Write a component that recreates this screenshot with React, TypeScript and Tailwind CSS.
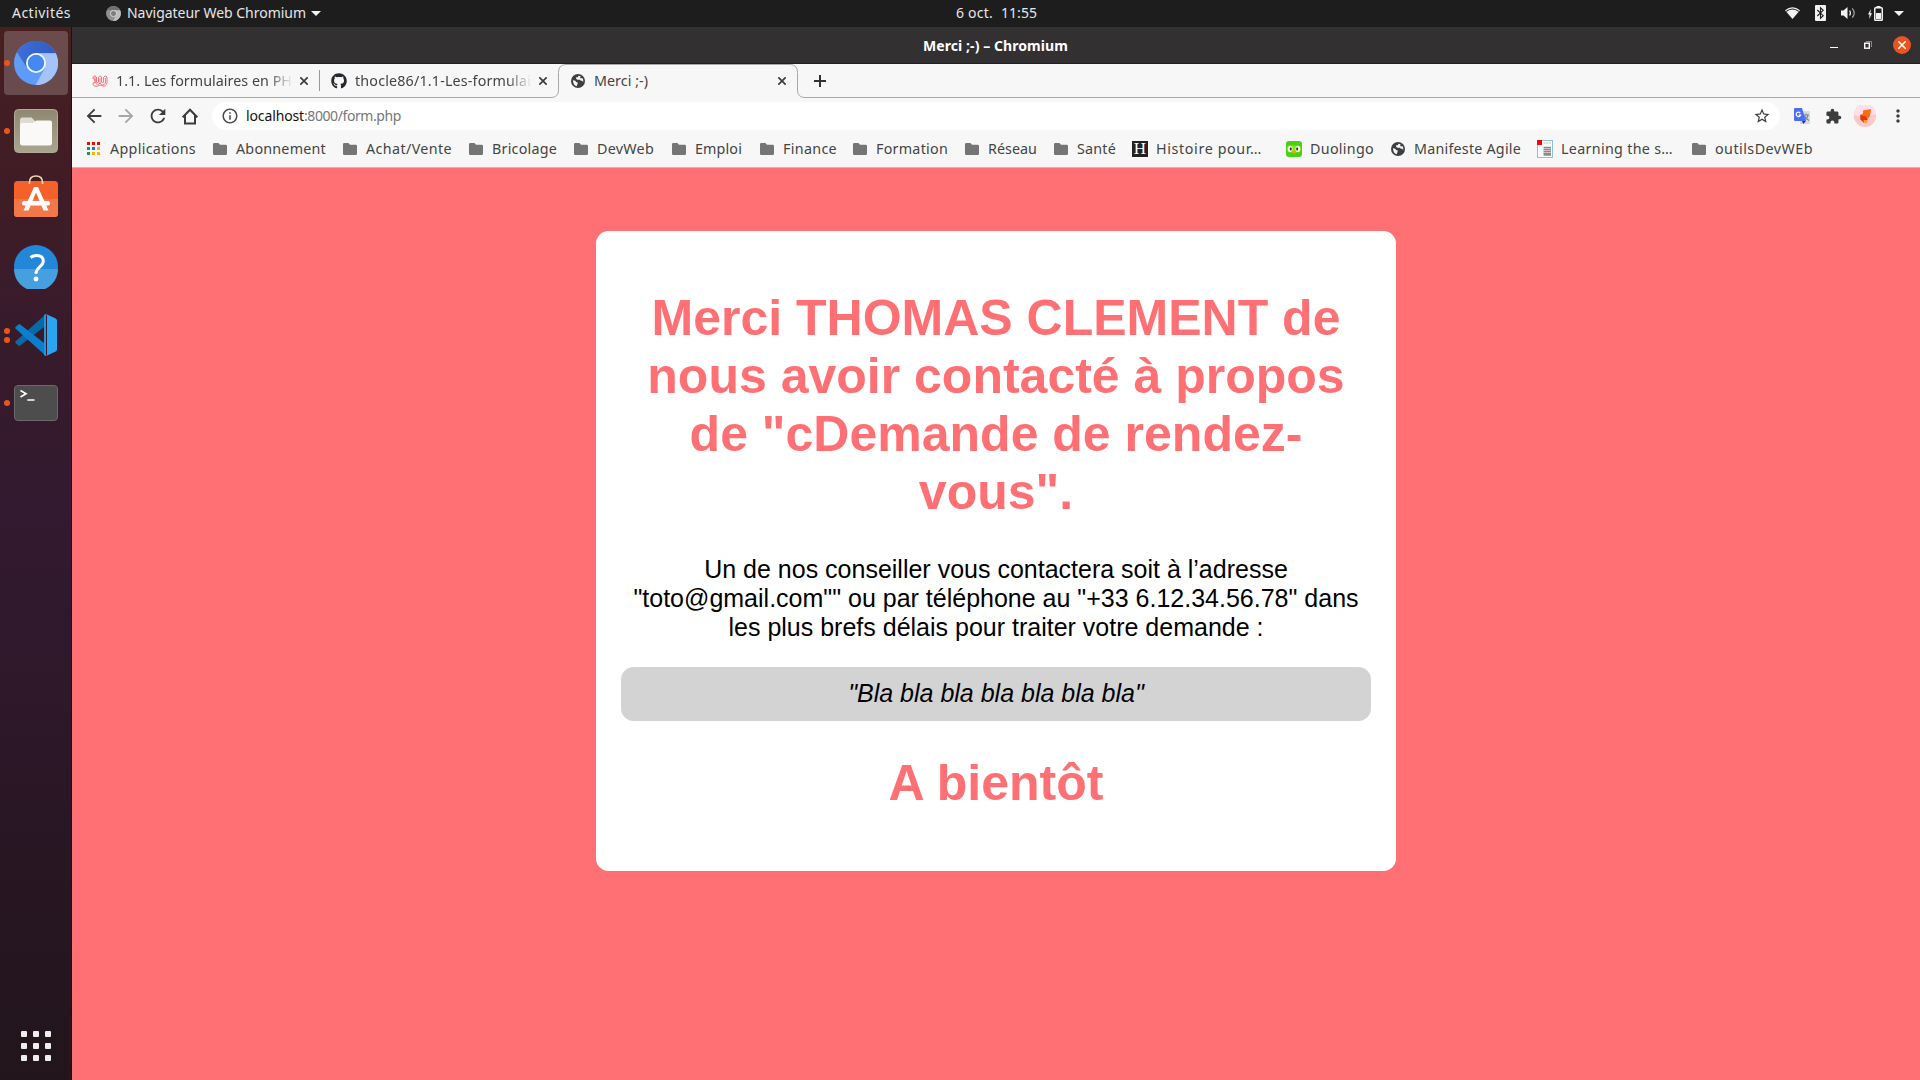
import { useLayoutEffect, useRef, useState } from "react";
import type { ReactNode } from "react";
import { MdArrowBack, MdArrowForward, MdExtension, MdInfoOutline, MdMoreVert, MdRefresh, MdStarBorder } from "react-icons/md";
import { FaGithub } from "react-icons/fa";

/* Single-line label whose letter spacing is adjusted to fill the given width. */
function Label({ text, width, className = "" }: { text: string; width: number; className?: string }) {
  const ref = useRef<HTMLSpanElement>(null);
  const [spacing, setSpacing] = useState(0);
  useLayoutEffect(() => {
    if (!ref.current) return;
    const natural = ref.current.getBoundingClientRect().width - spacing * text.length;
    setSpacing((width - natural) / text.length);
  }, [text, width]);
  return (
    <span className={`block shrink-0 whitespace-pre ${className}`} style={{ width }}>
      <span ref={ref} className="inline-block" style={{ letterSpacing: spacing }}>
        {text}
      </span>
    </span>
  );
}

const Folder = () => (
  <svg className="h-3 w-3.5 shrink-0" viewBox="0 0 14 12" fill="#757575">
    <path d="M1.3 0H5.4L7 1.7H12.7Q14 1.7 14 3V10.7Q14 12 12.7 12H1.3Q0 12 0 10.7V1.3Q0 0 1.3 0Z" />
  </svg>
);

const Globe = () => (
  <svg className="h-3.5 w-3.5 shrink-0" viewBox="0 0 14 14">
    <circle cx="7" cy="7" r="7" fill="#3c3e40" />
    <path d="M2 6.2Q3 6 4.2 6.8L5.4 8.2H6.6V9.8L5.6 12.2Q2 11 2 6.2Z" fill="#f7f7f7" />
    <path d="M7.6 1.8L6.8 3.3H5.1V4.8L6.4 5.7H9L9.8 6.8H11.1L12.2 8Q12.7 5.5 11.3 3.9L9.8 4.4L9.1 3.2L9.7 2.3Z" fill="#f7f7f7" />
  </svg>
);

const Apps = () => {
  const colors = ["#f00", "#f00", "#f00", "#0f9d58", "#1a73e8", "#ffb300", "#0f9d58", "#ffb300", "#ffb300"];
  return (
    <svg className="h-[13px] w-[13px] shrink-0" viewBox="0 0 13 13">
      {colors.map((c, i) => (
        <rect key={i} x={(i % 3) * 5} y={Math.floor(i / 3) * 5} width="3" height="3" fill={c} />
      ))}
    </svg>
  );
};

const SerifH = () => (
  <span className="flex h-4 w-4 shrink-0 items-center justify-center bg-[#222] font-['Liberation_Serif',serif] text-[17px] leading-none text-white">
    H
  </span>
);

const Owl = () => (
  <svg className="h-4 w-4 shrink-0" viewBox="0 0 16 16">
    <rect width="16" height="16" rx="3" fill="#4bd012" />
    <path d="M1 7Q1 4 4 4.5H12Q15 4 15 7V9Q14 12 11 11.5H5Q2 12 1 9Z" fill="#89e219" />
    <ellipse cx="4.2" cy="8" rx="2.3" ry="3" fill="#fff" />
    <ellipse cx="11.8" cy="8" rx="2.3" ry="3" fill="#fff" />
    <ellipse cx="4.8" cy="8" rx="1" ry="1.7" fill="#333" />
    <ellipse cx="11.2" cy="8" rx="1" ry="1.7" fill="#333" />
    <path d="M6.2 10.2L8 9.4L9.8 10.2L9 12.4H7Z" fill="#ff9d00" />
  </svg>
);

const PageIcon = () => (
  <svg className="h-[18px] w-4 shrink-0" viewBox="0 0 16 18">
    <rect x=".5" y=".5" width="15" height="17" fill="#fff" stroke="#8fc3d2" />
    <rect width="5" height="5" fill="#f00" />
    <path d="M6.5 3H14" stroke="#bbb" strokeDasharray="2 .6" />
    <path d="M6.5 7.5H14M6.5 9.5H14M6.5 11.5H14M6.5 13.5H14M6.5 15H14" stroke="#8a8a8a" strokeWidth="1.3" />
  </svg>
);

const bookmarks: { icon: ReactNode; text: string; width: number; slot: string }[] = [
  { icon: <Apps />, text: "Applications", width: 86, slot: "w-[126px] gap-[10px]" },
  { icon: <Folder />, text: "Abonnement", width: 90, slot: "w-[130px] gap-[9px]" },
  { icon: <Folder />, text: "Achat/Vente", width: 86, slot: "w-[126px] gap-[9px]" },
  { icon: <Folder />, text: "Bricolage", width: 65, slot: "w-[105px] gap-[9px]" },
  { icon: <Folder />, text: "DevWeb", width: 57, slot: "w-[98px] gap-[9px]" },
  { icon: <Folder />, text: "Emploi", width: 47, slot: "w-[88px] gap-[9px]" },
  { icon: <Folder />, text: "Finance", width: 54, slot: "w-[93px] gap-[9px]" },
  { icon: <Folder />, text: "Formation", width: 72, slot: "w-[112px] gap-[9px]" },
  { icon: <Folder />, text: "Réseau", width: 49, slot: "w-[89px] gap-[9px]" },
  { icon: <Folder />, text: "Santé", width: 39, slot: "w-[78px] gap-[9px]" },
  { icon: <SerifH />, text: "Histoire pour…", width: 106, slot: "w-[154px] gap-[8px]" },
  { icon: <Owl />, text: "Duolingo", width: 64, slot: "w-[105px] gap-[8px]" },
  { icon: <Globe />, text: "Manifeste Agile", width: 107, slot: "w-[146px] gap-[9px]" },
  { icon: <PageIcon />, text: "Learning the s…", width: 112, slot: "w-[155px] gap-[8px]" },
  { icon: <Folder />, text: "outilsDevWEb", width: 98, slot: "w-[130px] gap-[9px]" },
];

const Close = () => (
  <svg className="h-2 w-2 shrink-0" viewBox="0 0 8 8" stroke="#3c3c3c" strokeWidth="1.7">
    <path d="M.3.3L7.7 7.7M7.7.3L.3 7.7" />
  </svg>
);

const ChromiumGray = () => (
  <svg className="h-[15px] w-[15px] shrink-0" viewBox="0 0 16 16">
    <circle cx="8" cy="8" r="8" fill="#8f8f8f" />
    <path d="M1.2 4A8 8 0 0 1 15 4.5H8Z" fill="#6f6f6f" />
    <path d="M15 4.5A8 8 0 0 1 7.6 16L11 9L9 4.5Z" fill="#bdbdbd" />
    <circle cx="8" cy="8" r="3.3" fill="#7d7d7d" stroke="#ddd" strokeWidth="1" />
  </svg>
);

function TopBar() {
  return (
    <header className="flex h-[27px] shrink-0 items-center bg-[#1d1d1d] pb-px text-[14px] leading-[26px] text-[#e6e6e6]">
      <Label text="Activités" width={59} className="ml-3" />
      <div className="ml-[35px] flex items-center">
        <ChromiumGray />
        <Label text="Navigateur Web Chromium" width={179} className="ml-[6px]" />
        <svg className="ml-[5px] h-[5px] w-[10px]" viewBox="0 0 10 5" fill="#f2f2f2"><path d="M0 0H10L5 5Z" /></svg>
      </div>
      <div className="ml-[635px] flex">
        <Label text="6 oct." width={37} />
        <Label text="11:55" width={36} className="ml-2" />
      </div>
      <div className="ml-[748px] flex items-center text-[#f2f2f2]">
        <svg className="h-3 w-[15px]" viewBox="0 0 15 12">
          <path d="M0 3.2Q7.5-2.8 15 3.2L7.5 12Z" fill="#f2f2f2" />
          <path d="M1.2 4.4Q7.5-.5 13.8 4.4" fill="none" stroke="#1d1d1d" strokeWidth="1.1" />
        </svg>
        <svg className="ml-[15px] h-4 w-[11px]" viewBox="0 0 11 16">
          <rect width="11" height="16" rx="1" fill="#f2f2f2" />
          <path d="M2.3 5L8.2 10.7L5.5 13.2V2.8L8.2 5.3L2.3 11" fill="none" stroke="#1d1d1d" strokeWidth="1.1" />
        </svg>
        <svg className="ml-[15px] h-3 w-[15px]" viewBox="0 0 15 12">
          <path d="M0 3.5H2.5L6.5 0V12L2.5 8.5H0Z" fill="#f2f2f2" />
          <path d="M8.6 3.5Q10.3 6 8.6 8.5" fill="none" stroke="#f2f2f2" strokeWidth="1.2" />
          <path d="M11.2 1.3Q15.2 6 11.2 10.7" fill="none" stroke="#a5a5a5" strokeWidth="1.2" />
        </svg>
        <svg className="ml-[12px] h-[15px] w-[15px]" viewBox="0 0 15 15" fill="#f2f2f2">
          <path d="M2.8 3L0 8.5H1.6L1.2 13L4 7.3H2.4Z" />
          <rect x="6.75" y="1.75" width="7.5" height="12.5" rx=".8" fill="none" stroke="#f2f2f2" strokeWidth="1.5" />
          <rect x="8.5" y="0" width="4" height="2" />
          <rect x="8" y="7" width="5" height="6" />
        </svg>
        <svg className="ml-[11px] h-[5px] w-[10px]" viewBox="0 0 10 5" fill="#f2f2f2"><path d="M0 0H10L5 5Z" /></svg>
      </div>
    </header>
  );
}

const Dots = ({ count }: { count: number }) => (
  <span className="flex w-[14px] shrink-0 flex-col items-center gap-[3px]">
    {Array.from({ length: count }, (_, i) => (
      <span key={i} className="h-[6px] w-[6px] rounded-full bg-[#e95420]" />
    ))}
  </span>
);

function Dock() {
  const apps: { dots: number; active?: boolean; icon: ReactNode }[] = [
    {
      dots: 1,
      active: true,
      icon: (
        <svg className="h-11 w-11" viewBox="0 0 44 44">
          <defs>
            <linearGradient id="cTop" x1="0" x2="1"><stop stopColor="#3f6fd8" /><stop offset="1" stopColor="#2f5bc6" /></linearGradient>
            <linearGradient id="cLeft" x1="0" y1="0" x2="0" y2="1"><stop stopColor="#669df6" /><stop offset="1" stopColor="#5b9bfb" /></linearGradient>
          </defs>
          <circle cx="22" cy="22" r="22" fill="url(#cLeft)" />
          <path d="M2.9 11A22 22 0 0 1 41.8 12.2H22L13 27Z" fill="url(#cTop)" />
          <path d="M41.8 12.2A22 22 0 0 1 21.5 44L31 27L22 12.2Z" fill="#a3c3fa" />
          <circle cx="22" cy="22" r="10" fill="#f5f8ff" />
          <circle cx="22" cy="22" r="8.2" fill="#4688f1" />
        </svg>
      ),
    },
    {
      dots: 1,
      icon: (
        <svg className="h-11 w-11" viewBox="0 0 44 44">
          <defs><linearGradient id="fb" x1="0" y1="0" x2="0" y2="1"><stop stopColor="#8f8871" /><stop offset="1" stopColor="#aaa38f" /></linearGradient></defs>
          <rect x=".5" y=".5" width="43" height="43" rx="4" fill="url(#fb)" stroke="#b0ac99" />
          <path d="M6 11Q6 8.5 8.5 8.5H17.5L21.5 12.5H31V20H6Z" fill="#dfdbce" />
          <path d="M6 15.5Q6 14 8 14H19L22.5 11.5H36Q38 11.5 38 13.5V34Q38 36.5 35.5 36.5H8.5Q6 36.5 6 34Z" fill="#faf9f7" />
        </svg>
      ),
    },
    {
      dots: 0,
      icon: (
        <svg className="h-12 w-11" viewBox="0 0 44 48">
          <rect y="6" width="44" height="36" rx="3.5" fill="#f5612a" />
          <path d="M0 24H44V38.5Q44 42 40.5 42H3.5Q0 42 0 38.5Z" fill="#f2784a" />
          <path d="M15.5 9V7.5Q15.5 1 22 1T28.5 7.5V9" fill="none" stroke="#f0d8b0" strokeWidth="1.6" />
          <path d="M20 12H24L34.5 35.5H29.5L22 17.5L14.5 35.5H9.5Z" fill="#fff" />
          <rect x="8" y="26" width="28" height="4.5" rx="2.2" fill="#fff" />
        </svg>
      ),
    },
    {
      dots: 0,
      icon: (
        <svg className="h-11 w-11" viewBox="0 0 44 44">
          <circle cx="22" cy="22" r="22" fill="#2287d8" />
          <path d="M0 24H44A22 22 0 0 1 0 24Z" fill="#46a0df" />
          <path d="M16.5 12.5Q19 10.5 22.5 10.5Q29.3 10.5 29.3 16Q29.3 19 26 21.7Q22 25 22 28.8" fill="none" stroke="#fff" strokeWidth="3" />
          <circle cx="22" cy="34" r="2.4" fill="#fff" />
        </svg>
      ),
    },
    {
      dots: 2,
      icon: (
        <svg className="h-[42px] w-[42px]" viewBox="0 0 42 42">
          <path d="M31 0V11.5L5.2 31.6Q4.3 32.3 3.5 31.6L.7 29.2Q-.3 28.3.7 27.3Z" fill="#0769a8" />
          <path d="M31 42V30.5L5.2 10.4Q4.3 9.7 3.5 10.4L.7 12.8Q-.3 13.7.7 14.7Z" fill="#0a7fcb" />
          <path d="M31 0L40.7 4.5Q42 5.2 42 6.7V35.3Q42 36.8 40.7 37.5L31 42Q32 41 32 39.5V2.5Q32 1 31 0Z" fill="#2ba4f2" />
          <path d="M31 0V42L29 41.3V1Z" fill="#2196e0" />
        </svg>
      ),
    },
    {
      dots: 1,
      icon: (
        <svg className="h-9 w-11" viewBox="0 0 44 36">
          <rect x=".5" y=".5" width="43" height="35" rx="3.5" fill="#4d4d4d" stroke="#6a6a6a" />
          <path d="M6.5 5.5L12 8.7L6.5 12M13.3 15H20.5" fill="none" stroke="#fff" strokeWidth="1.7" />
        </svg>
      ),
    },
  ];
  return (
    <aside className="flex w-[72px] shrink-0 flex-col border-r border-[#1f1018] bg-[linear-gradient(180deg,#47201f_0%,#421d24_10%,#371b2b_30%,#341a30_45%,#2b1727_70%,#22151b_100%)] pt-1">
      {apps.map((app, i) => (
        <div key={i} className="flex h-[68px] items-start">
          <div className={app.active ? "ml-1 flex h-16 w-16 items-center rounded bg-white/20" : "ml-1 flex h-16 w-16 items-center"}>
            <div className="-ml-1 flex w-[72px] shrink-0 items-center">
              <Dots count={app.dots} />
              <span className="flex w-11 justify-center">{app.icon}</span>
            </div>
          </div>
        </div>
      ))}
      <div className="mb-[19px] ml-[21px] mt-auto grid w-[30px] grid-cols-3 gap-[6px]">
        {Array.from({ length: 9 }, (_, i) => (
          <span key={i} className="h-[6px] w-[6px] rounded-[1px] bg-[#eeeeec]" />
        ))}
      </div>
    </aside>
  );
}

function TitleBar() {
  return (
    <div className="flex h-[37px] shrink-0 items-center border-b border-[#211f20] bg-[#333031] text-[14px] font-bold leading-[36px] text-white">
      <Label text="Merci ;-) – Chromium" width={145} className="ml-[851px] pt-px" />
      <svg className="ml-[762px] h-[9px] w-2" viewBox="0 0 8 9"><rect y="6" width="8" height="1" fill="#fff" /></svg>
      <svg className="ml-[26px] h-2 w-2" viewBox="0 0 8 8">
        <path d="M2 .5H7.5V6" fill="none" stroke="#8b898a" />
        <rect x=".7" y="2.2" width="4.6" height="5" fill="none" stroke="#fff" strokeWidth="1.4" />
      </svg>
      <span className="ml-[21px] flex h-[18px] w-[18px] items-center justify-center rounded-full bg-[#e95420]">
        <svg className="h-2 w-2" viewBox="0 0 8 8" stroke="#fff" strokeWidth="1.5"><path d="M.3.3L7.7 7.7M7.7.3L.3 7.7" /></svg>
      </span>
    </div>
  );
}

function TabStrip() {
  return (
    <div className="flex h-[34px] shrink-0 bg-[#f7f7f7] text-[14.3px] leading-[33px] text-[#444]">
      <div className="flex w-[247px] items-center border-b border-[#a8a8a8] pl-5">
        <svg className="h-3 w-4 shrink-0" viewBox="0 0 16 12" fill="none" stroke="#f57580" strokeWidth="1">
          <path d="M1 2Q3-.5 4.5 2V7Q5.5 9 6.5 7V2.5Q7.5-.5 9.5 2V7Q10.5 9 11.5 7V2.5Q13-.5 15 2V8Q14 12 10.5 11Q8 9 6 11Q1 12.5 1 8L3 7.5V4L1 3.8Z" />
          <path d="M3 1.5V6.5Q5 11.5 8 8V3M8 8Q11 12 13.4 8V3" />
        </svg>
        <div className="ml-2 flex [mask-image:linear-gradient(90deg,#000_152px,transparent_177px)]">
          <Label text="1.1. Les formulaires en PH" width={176} />
        </div>
        <span className="ml-2 flex shrink-0"><Close /></span>
        <span className="ml-[11px] h-[21px] w-px shrink-0 bg-[#999]" />
      </div>
      <div className="flex w-[232px] items-center border-b border-[#a8a8a8] pl-3">
        <FaGithub className="h-4 w-4 shrink-0 text-[#24292e]" />
        <div className="ml-2 flex [mask-image:linear-gradient(90deg,#000_152px,transparent_177px)]">
          <Label text="thocle86/1.1-Les-formulai" width={176} />
        </div>
        <span className="ml-[8px] flex shrink-0"><Close /></span>
      </div>
      <div className="relative flex w-[254px] items-center pl-5">
        <svg className="absolute inset-0 h-[34px] w-[254px]" viewBox="0 0 254 34" fill="none" stroke="#a8a8a8">
          <path d="M0 33.5Q7.5 33.5 7.5 26V8.5Q7.5 .5 15 .5H239Q246.5 .5 246.5 8.5V26Q246.5 33.5 254 33.5" />
        </svg>
        <Globe />
        <Label text="Merci ;-)" width={54} className="-mt-px ml-[9px]" />
        <span className="ml-[130px] flex"><Close /></span>
      </div>
      <div className="flex flex-1 items-center border-b border-[#a8a8a8] pl-[9px]">
        <svg className="h-3 w-3" viewBox="0 0 12 12" stroke="#333" strokeWidth="2"><path d="M6 0V12M0 6H12" /></svg>
      </div>
    </div>
  );
}

function Toolbar() {
  return (
    <div className="flex h-9 shrink-0 items-center bg-[#f7f7f7] text-[#3c3c3c]">
      <MdArrowBack className="ml-[11px] h-[22px] w-[22px]" />
      <MdArrowForward className="ml-[10px] h-[22px] w-[22px] text-[#a6a6a6]" />
      <MdRefresh className="ml-[10px] h-[22px] w-[22px]" />
      <svg className="ml-[13px] h-[17px] w-4" viewBox="0 0 16 17" fill="none" stroke="#3c3c3c" strokeWidth="2">
        <path d="M.7 9.3L8 1.7L15.3 9.3M3 7.5V15.5H13V7.5" />
      </svg>
      <div className="ml-[14px] flex h-7 w-[1568px] shrink-0 items-center rounded-full bg-white pl-[9px] pr-[9px]">
        <MdInfoOutline className="h-[18px] w-[18px] text-[#4a4a4a]" />
        <div className="ml-[7px] flex text-[14px] leading-7">
          <Label text="localhost" width={58} className="text-[#111]" />
          <Label text=":8000/form.php" width={97} className="text-[#777]" />
        </div>
        <MdStarBorder className="ml-auto h-[18px] w-[18px] text-[#3c3c3c]" />
      </div>
      <svg className="ml-[14px] h-4 w-4" viewBox="0 0 16 16">
        <rect x="6" y="3" width="10" height="13" rx="1" fill="#d9dadb" />
        <path d="M9.5 7H15M12.2 5.5V7M10 12Q13.5 10.5 14 7M10.5 8Q12 11 15 12.5" fill="none" stroke="#6c8790" strokeWidth="1.1" />
        <path d="M1 0H8L12 13H1Q0 13 0 12V1Q0 0 1 0Z" fill="#4c6ef5" />
        <path d="M8 13H12L9.2 16Z" fill="#4321b5" />
        <path d="M6.2 5A2.2 2.2 0 1 0 6.6 7H4.6" fill="none" stroke="#fff" strokeWidth="1.2" />
      </svg>
      <MdExtension className="ml-[15px] h-[17px] w-[17px] text-[#3c3c3c]" />
      <svg className="ml-3 h-[22px] w-[22px]" viewBox="0 0 22 22">
        <circle cx="11" cy="11" r="11" fill="#fbc7c7" />
        <path d="M0 10A11 11 0 0 1 22 9L11 13Z" fill="#fde0e3" />
        <path d="M9 5.5L17 4L16 11L14.5 13L6 10L9 8.5Z" fill="#ff6a13" />
        <path d="M6 10L12 11.5L14 14L10 18L6.5 14.5Z" fill="#d93a0b" />
        <path d="M9.5 15H13V18H10Z" fill="#ff9d45" />
      </svg>
      <MdMoreVert className="ml-[12px] h-5 w-5" />
    </div>
  );
}

function Page() {
  return (
    <main className="flex flex-1 justify-center bg-[#ff7074] pt-[63px] font-['Liberation_Sans',Arial,sans-serif] text-[25px] leading-[29px]">
      <section className="h-[640px] w-[800px] rounded-[12.5px] bg-white p-[25px] text-center text-black">
        <h1 className="mt-[32.5px] text-[50px] font-bold leading-[58px] text-[#ff7074]">
          Merci THOMAS CLEMENT de nous avoir contacté à propos de "cDemande de rendez-vous".
        </h1>
        <p className="mt-[34px]">
          Un de nos conseiller vous contactera soit à l’adresse "toto@gmail.com"" ou par téléphone au "+33 6.12.34.56.78" dans les plus brefs délais pour traiter votre demande :
        </p>
        <p className="mt-[25px] rounded-[12.5px] bg-[#d3d3d3] py-[12.5px] italic">"Bla bla bla bla bla bla bla"</p>
        <h1 className="mt-[33.5px] text-[50px] font-bold leading-[58px] text-[#ff7074]">A bientôt</h1>
      </section>
    </main>
  );
}

export default function App() {
  return (
    <div className="flex h-[1080px] w-[1920px] flex-col overflow-hidden font-['Noto_Sans','Open_Sans',sans-serif]">
      <TopBar />
      <div className="flex min-h-0 flex-1">
        <Dock />
        <div className="flex min-w-0 flex-1 flex-col">
          <TitleBar />
          <TabStrip />
          <Toolbar />
          <div className="flex h-[34px] shrink-0 items-center border-b border-[#b9bfc2] bg-[#f7f7f7] pb-1 pl-[15px] text-[14.3px] leading-[28px] text-[#444]">
            {bookmarks.map((b) => (
              <div key={b.text} className={`flex shrink-0 items-center ${b.slot}`}>
                {b.icon}
                <Label text={b.text} width={b.width} />
              </div>
            ))}
          </div>
          <Page />
        </div>
      </div>
    </div>
  );
}
